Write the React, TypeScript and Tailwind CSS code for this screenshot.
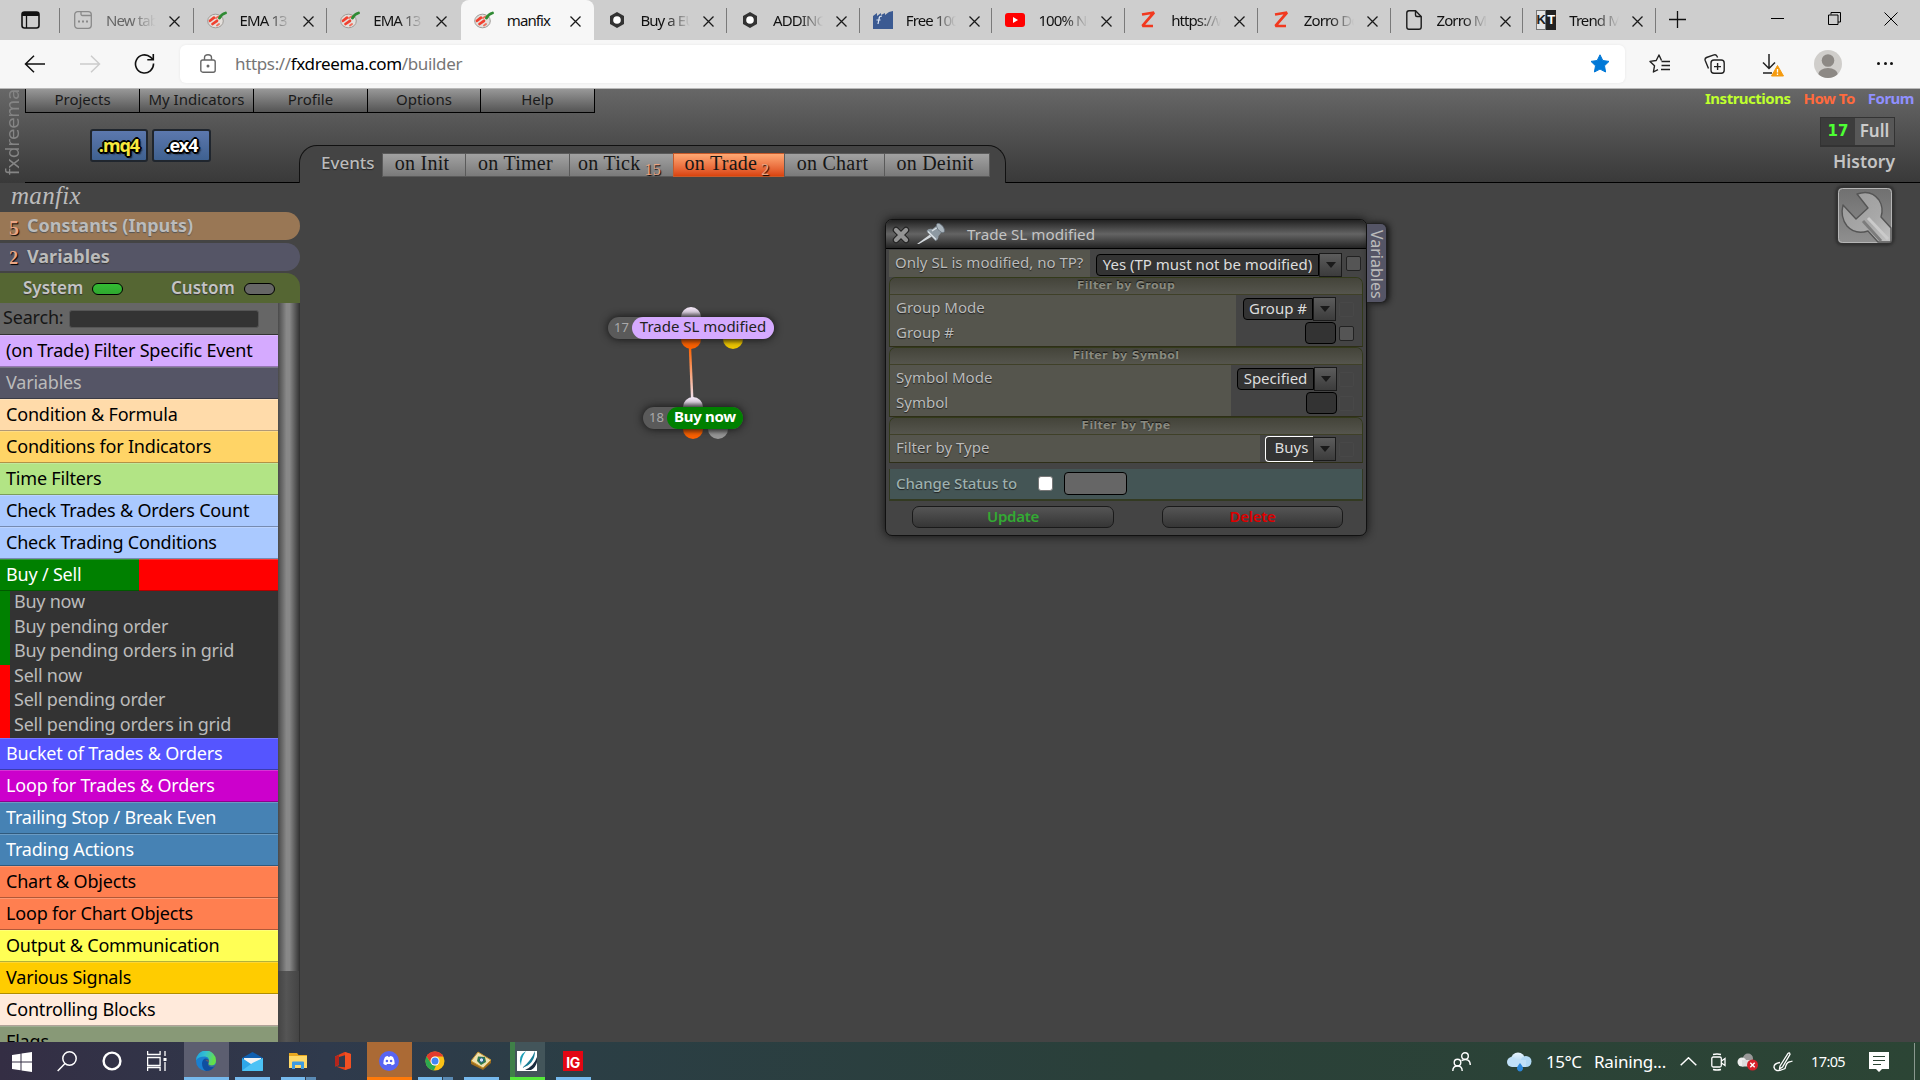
import React from "react";

type Kids = { children?: React.ReactNode };

/* ---------- browser tabs ---------- */

const Dish = () => (
  <svg width="20" height="18" viewBox="0 0 20 18">
    <ellipse cx="8.500" cy="10" rx="7.800" ry="6.800" fill="#e4e0dc" stroke="#a09c98" strokeWidth="1" />
    <path d="M3 9.800 7 6.600M5.500 13l4.500-3.200" stroke="#f0402f" strokeWidth="2.700" strokeLinecap="round" />
    <path d="M9 7 11.500 5.500M10 14.500l2-1.500" stroke="#f0705f" strokeWidth="2" strokeLinecap="round" />
    <path d="M12.500 7c1.500-3 3.500-4.500 6-5" stroke="#2f8a33" strokeWidth="2.800" fill="none" strokeLinecap="round" />
  </svg>
);
const NewTabIcon = () => (
  <svg width="18" height="18" viewBox="0 0 18 18" fill="none" stroke="#8a8a8a" strokeWidth="1.300">
    <rect x="0.700" y="0.700" width="16.600" height="16.600" rx="3" />
    <path d="M7 .7v2.300q0 1.500 1.500 1.500h8.500" />
    <path d="M4 10.500h2M8 10.500h2M12 10.500h2" strokeWidth="2" />
  </svg>
);
const HexIcon = () => (
  <svg width="18" height="18" viewBox="0 0 18 18">
    <path d="M9 1 16 5v8l-7 4-7-4V5z" fill="#333" />
    <circle cx="9" cy="9" r="3.800" fill="#fff" />
  </svg>
);
const FreeIcon = () => (
  <svg width="20" height="18" viewBox="0 0 20 18">
    <path d="M0 5 4 2v3l4-3v2l4-2v2l4-3 4-1v18H0z" fill="#3b5a92" />
    <path d="M9 5Q6 5 6 8l-1 5M3.500 9h4" stroke="#dfe7f4" strokeWidth="1.200" fill="none" />
  </svg>
);
const YtIcon = () => (
  <svg width="20" height="14" viewBox="0 0 20 14">
    <rect width="20" height="14" rx="3" fill="#f00" />
    <path d="M8 4l5 3-5 3z" fill="#fff" />
  </svg>
);
const ZIcon = () => (
  <svg width="16" height="18" viewBox="0 0 16 18">
    <path d="M2 3.500 14 1.500 2.500 14.800 13 15" stroke="#f1391f" strokeWidth="2.700" fill="none" strokeLinejoin="bevel" />
  </svg>
);
const FileIcon = () => (
  <svg width="16" height="20" viewBox="0 0 16 20" fill="none" stroke="#1a1a1a" strokeWidth="1.400">
    <path d="M3 .8h6.500l5.700 5.700V17q0 2.200-2.200 2.200H3Q.8 19.200.8 17V3Q.8.8 3 .8z" />
    <path d="M9.500.8V5q0 1.500 1.500 1.500h4.200" />
  </svg>
);
const KtIcon = () => (
  <span className="flex h-5 w-5 font-['Liberation_Sans_Narrow','Liberation_Sans'] text-[13px] leading-5 font-bold">
    <span className="flex w-1/2 justify-center border border-[#777] bg-[#e4e4e4] leading-[18px] text-[#222]">K</span>
    <span className="flex w-1/2 justify-center bg-[#222] text-white">T</span>
  </span>
);
const Cross = () => (
  <svg width="11" height="11" viewBox="0 0 11 11" stroke="#1a1a1a" strokeWidth="1.300">
    <path d="M.5.5l10 10M10.500.5l-10 10" />
  </svg>
);

const tabs: { t: string; i: React.ReactNode; w: string; dim?: boolean; active?: boolean; sep?: boolean }[] = [
  { t: "New tab", i: <NewTabIcon />, w: "w-[133.600px]", dim: true, sep: true },
  { t: "EMA 13", i: <Dish />, w: "w-[133.600px]", sep: true },
  { t: "EMA 13", i: <Dish />, w: "w-[133.600px]" },
  { t: "manfix", i: <Dish />, w: "w-[133.600px]", active: true },
  { t: "Buy a EUR", i: <HexIcon />, w: "w-[132.700px]", sep: true },
  { t: "ADDING", i: <HexIcon />, w: "w-[132.700px]", sep: true },
  { t: "Free 100", i: <FreeIcon />, w: "w-[132.700px]", sep: true },
  { t: "100% No", i: <YtIcon />, w: "w-[132.700px]", sep: true },
  { t: "https://w", i: <ZIcon />, w: "w-[132.700px]", sep: true },
  { t: "Zorro Do", i: <ZIcon />, w: "w-[132.700px]", sep: true },
  { t: "Zorro Ma", i: <FileIcon />, w: "w-[132.700px]", sep: true },
  { t: "Trend Mo", i: <KtIcon />, w: "w-[132.700px]", sep: true },
];

const TabStrip = () => (
  <div className="flex h-10 shrink-0 bg-[#cecece] text-[15px] text-[#111]">
    <div className="flex w-[60px] shrink-0 items-center pl-[21px]">
      <svg width="19" height="18" viewBox="0 0 19 18">
        <rect x="1" y="1" width="17" height="16" rx="2.500" fill="none" stroke="#111" strokeWidth="1.600" />
        <path d="M1 3q0-2 2-2h13q2 0 2 2v2H1z" fill="#111" />
        <path d="M5.500 5v12" stroke="#111" strokeWidth="1.300" />
      </svg>
      <span className="ml-[18.500px] h-[25px] w-px bg-[#7a7a7a]" />
    </div>
    {tabs.map((t, k) => (
      <div key={k} className={`flex h-10 ${t.w} shrink-0 items-center ${t.active ? "rounded-t-lg bg-[#f7f7f7]" : ""}`}>
        <span className="ml-[13px] flex w-5 shrink-0 justify-center">{t.i}</span>
        <span
          className={`ml-[13px] w-[51px] overflow-hidden tracking-[-0.9px] whitespace-nowrap ${t.dim ? "text-[#666]" : ""} ${
            t.active ? "" : "[mask-image:linear-gradient(90deg,#000_50%,transparent_98%)]"
          }`}
        >
          {t.t}
        </span>
        <span className="mt-0.5 ml-3 shrink-0"><Cross /></span>
        <span className={`ml-auto h-[25px] w-px ${t.sep ? "bg-[#7a7a7a]" : ""}`} />
      </div>
    ))}
    <svg className="mt-[11px] ml-[13px] shrink-0" width="17" height="17" viewBox="0 0 17 17" stroke="#111" strokeWidth="1.300">
      <path d="M8.500 0v17M0 8.500h17" />
    </svg>
    <div className="ml-auto flex items-start gap-[43px] pr-[22px]">
      <span className="mt-[18px] mr-px h-px w-[13px] bg-black" />
      <svg className="mt-3" width="13" height="13" viewBox="0 0 13 13" fill="none" stroke="#000">
        <path d="M.5 3h9.500v9.500H.5zM3 2.500V.5h9.500V10H10" />
      </svg>
      <svg className="mt-3" width="14" height="14" viewBox="0 0 14 14" stroke="#000">
        <path d="M.5.5l13 13M13.500.5l-13 13" />
      </svg>
    </div>
  </div>
);

const Toolbar = () => (
  <div className="flex h-[49px] shrink-0 items-center border-b border-[#b9b9b9] bg-[#f7f7f7] pb-px">
    <svg className="ml-6" width="21" height="18" viewBox="0 0 21 18" fill="none" stroke="#111" strokeWidth="1.500">
      <path d="M21 9H1.500M10 .8 1.500 9l8.500 8.200" />
    </svg>
    <svg className="ml-[35px]" width="21" height="18" viewBox="0 0 21 18" fill="none" stroke="#ccc" strokeWidth="1.500">
      <path d="M0 9h19.500M11 .8 19.500 9 11 17.200" />
    </svg>
    <svg className="ml-[33px]" width="21" height="20" viewBox="0 0 21 20" fill="none" stroke="#111" strokeWidth="1.600">
      <path d="M19.500 9.500a9 9 0 1 1-3-6.300l2.500 2.300M19.300 0v5.800h-6" />
    </svg>
    <div className="ml-[25px] flex h-[38px] w-[1445px] items-center rounded-md bg-white shadow-[0_0_3px_#0001]">
      <svg className="ml-5" width="16" height="19" viewBox="0 0 16 19" fill="none" stroke="#666" strokeWidth="1.400">
        <rect x=".8" y="6" width="14.400" height="12.200" rx="2" />
        <path d="M4.500 6V3.800a3.500 3 0 0 1 7 0V6" />
        <circle cx="8" cy="12" r=".8" fill="#666" />
      </svg>
      <span className="ml-[19px] text-[17px] tracking-[-0.350px] text-[#767676]">
        https://<span className="text-black">fxdreema.com</span>/builder
      </span>
      <svg className="mr-[15px] ml-auto" width="20" height="19" viewBox="0 0 20 19">
        <path d="M10 .8l2.800 5.700 6.200.9-4.500 4.400 1.100 6.200L10 15.100 4.400 18l1.100-6.200L1 7.400l6.200-.9z" fill="#0078d7" stroke="#0078d7" strokeLinejoin="round" />
      </svg>
    </div>
    <svg className="ml-6" width="21" height="19" viewBox="0 0 21 19" fill="none" stroke="#222" strokeWidth="1.400" strokeLinejoin="round">
      <path d="M12.500 6.500 10 1 7.200 6.500 1 7.400l4.500 4.400L4.400 18 9 15.600M12.500 7.500H21M12.500 11.500H21M12 15.500h9" />
    </svg>
    <svg className="ml-[34px]" width="21" height="20" viewBox="0 0 21 20" fill="none" stroke="#222" strokeWidth="1.400">
      <rect x="7" y="6" width="13.200" height="13.200" rx="3" />
      <path d="M13.600 9v7M10 12.600h7M4.500 14.500 1.200 6.500Q.5 4.500 2.500 3.500l7.500-2.600q2-.7 3 1.300l.6 1.300" />
    </svg>
    <svg className="mt-0.5 ml-[37px]" width="22" height="24" viewBox="0 0 22 24" fill="none" stroke="#222" strokeWidth="1.500">
      <path d="M7 1v14M1 9.500l6 6 6-6M1 20h9" />
      <path d="M15.500 12.500 21.500 23h-12z" fill="#f59b0f" stroke="#f59b0f" strokeWidth="1" />
      <path d="M15.500 16v3.500M15.500 20.500V22" stroke="#fff" strokeWidth="1.300" />
    </svg>
    <svg className="ml-[30px]" width="28" height="28" viewBox="0 0 28 28">
      <clipPath id="av"><circle cx="14" cy="14" r="14" /></clipPath>
      <g clipPath="url(#av)">
        <rect width="28" height="28" fill="#d0cecb" />
        <circle cx="14" cy="10.500" r="6.300" fill="#8d8985" />
        <ellipse cx="14" cy="25" rx="10" ry="7" fill="#8d8985" />
      </g>
    </svg>
    <div className="ml-[35px] flex gap-[3.500px]">
      {[0, 1, 2].map((i) => (
        <span key={i} className="h-[3px] w-[3px] rounded-full bg-[#111]" />
      ))}
    </div>
  </div>
);

/* ---------- application header ---------- */

const menu: [string, string][] = [
  ["Projects", "w-[114px]"],
  ["My Indicators", "w-[114px]"],
  ["Profile", "w-[114px]"],
  ["Options", "w-[113px]"],
  ["Help", "w-[114px]"],
];

const events: { t: string; w: string; n?: string; on?: boolean }[] = [
  { t: "on Init", w: "w-[83px]" },
  { t: "on Timer", w: "w-[104px]" },
  { t: "on Tick", w: "w-[104px]", n: "15" },
  { t: "on Trade", w: "w-[111px]", n: "2", on: true },
  { t: "on Chart", w: "w-[100px]" },
  { t: "on Deinit", w: "w-[106px]" },
];

const ExportBtn = ({ children, w, c }: Kids & { w: string; c: string }) => (
  <div
    className={`flex h-[33px] ${w} items-center justify-center rounded-[3px] border-2 border-[#20262e] bg-gradient-to-b from-[#5c78ae] to-[#3f6190] text-[18px] font-bold tracking-[-1px] ${c} [text-shadow:2px_0_#000,-2px_0_#000,0_2px_#000,0_-2px_#000,1px_1px_#000,-1px_-1px_#000,1px_-1px_#000,-1px_1px_#000,2px_2px_2px_#000]`}
  >
    {children}
  </div>
);

const Header = () => (
  <div className="flex h-[94px] shrink-0 bg-gradient-to-b from-[#676767] to-[#393939]">
    <div className="flex h-[86px] w-[25px] shrink-0 items-center justify-center">
      <span className="rotate-180 font-['DejaVu_Sans'] text-[18.500px] tracking-[-0.3px] text-[#858585] [writing-mode:vertical-rl]">fxdreema</span>
    </div>
    <div className="flex w-[275px] shrink-0 flex-col border-b border-black">
      <div className="flex h-6 w-[570px] border-b border-l border-black">
        {menu.map(([m, w]) => (
          <div
            key={m}
            className={`${w} shrink-0 border-r border-black bg-gradient-to-b from-[#989898] to-[#555] text-center text-[15px] leading-5 text-[#1a1a1a]`}
          >
            {m}
          </div>
        ))}
      </div>
      <div className="mt-4 flex gap-1 pl-[65px]">
        <ExportBtn w="w-[58px]" c="text-[#f7e83e]">.mq4</ExportBtn>
        <ExportBtn w="w-[59px]" c="text-white">.ex4</ExportBtn>
      </div>
    </div>
    <div className="mt-14 -ml-px flex h-[38px] w-[707px] shrink-0 rounded-t-[18px] border-x border-t border-[#111] bg-[#444]">
      <span className="w-[82px] pl-[21px] text-[17px] leading-[34px] font-medium text-[#bbb] [text-shadow:0_1px_1px_#222]">Events</span>
      <div className="mt-[7px] flex h-6 font-['Liberation_Serif'] text-[20px] tracking-[0.250px] text-[#161616]">
        {events.map((e) => (
          <div
            key={e.t}
            className={`${e.w} flex justify-center border border-r-0 last:border-r ${
              e.on
                ? "border-[#c75a2a] bg-gradient-to-b from-[#ffa873] to-[#d9430c]"
                : "border-[#5a5a5a] bg-gradient-to-b from-[#a2a2a2] to-[#7a7a7a]"
            } pr-1 leading-[19px] whitespace-nowrap`}
          >
            {e.t}
            {e.n && (
              <span className="relative top-[6px] ml-1 text-[16px] text-[#e9a583] [text-shadow:1px_1px_1px_#000]">{e.n}</span>
            )}
          </div>
        ))}
      </div>
    </div>
    <div className="flex flex-1 flex-col border-b border-black font-bold">
      <div className="flex justify-end gap-[13px] pr-[6px] text-[15px] leading-[19px] tracking-[-0.5px]">
        <span className="text-[#bfff2e]">Instructions</span>
        <span className="text-[#ff6a3d]">How To</span>
        <span className="text-[#9090ff]">Forum</span>
      </div>
      <div className="mt-[9px] mr-[25px] flex h-[30px] w-[75px] self-end border border-b-2 border-[#333] bg-[#575757] text-[17px] leading-[26px]">
        <span className="w-[34px] bg-[#3c3c3c] text-center font-['DejaVu_Sans'] text-[15px] text-[#4dff33]">17</span>
        <span className="flex-1 text-center font-semibold text-[#ccc]">Full</span>
      </div>
      <span className="mt-0.5 mr-[25px] self-end text-[17.500px] leading-6 font-semibold text-[#c4c4c4]">History</span>
    </div>
  </div>
);

/* ---------- sidebar ---------- */

const catsTop: [string, string][] = [
  ["(on Trade) Filter Specific Event", "bg-[#d5aaff] text-black"],
  ["Variables", "bg-[#555566] text-[#bbb]"],
  ["Condition & Formula", "bg-[#ffdbaa] text-black"],
  ["Conditions for Indicators", "bg-[#ffd466] text-black"],
  ["Time Filters", "bg-[#b2e485] text-black"],
  ["Check Trades & Orders Count", "bg-[#aac9ff] text-black"],
  ["Check Trading Conditions", "bg-[#aac9ff] text-black"],
];
const catsBottom: [string, string][] = [
  ["Bucket of Trades & Orders", "bg-[#5555ff] text-white"],
  ["Loop for Trades & Orders", "bg-[#cc00cc] text-white"],
  ["Trailing Stop / Break Even", "bg-[#4682b4] text-white"],
  ["Trading Actions", "bg-[#4682b4] text-white"],
  ["Chart & Objects", "bg-[#ff7f50] text-black"],
  ["Loop for Chart Objects", "bg-[#ff7f50] text-black"],
  ["Output & Communication", "bg-[#ffff55] text-black"],
  ["Various Signals", "bg-[#ffcc00] text-black"],
  ["Controlling Blocks", "bg-[#ffeadb] text-black"],
  ["Flags", "bg-[#889977] text-black"],
];
const orders = [
  "Buy now",
  "Buy pending order",
  "Buy pending orders in grid",
  "Sell now",
  "Sell pending order",
  "Sell pending orders in grid",
];

const Cat = ({ t, c }: { t: string; c: string }) => (
  <div className={`h-8 shrink-0 border-t border-b border-t-white/20 border-b-black/30 pl-[6px] text-[18px] leading-[29px] tracking-[-0.190px] whitespace-nowrap ${c}`}>{t}</div>
);

const Sidebar = () => (
  <div className="flex h-[859px] w-[300px] shrink-0 flex-col overflow-hidden">
    <div className="h-[29px] shrink-0 pl-[11px] font-['Liberation_Serif'] text-[25px] leading-[25px] tracking-[0.3px] text-[#bbb] italic">manfix</div>
    <div className="flex h-7 shrink-0 items-center rounded-r-[14px] bg-[#997755] pl-[9px] text-[18px] font-bold text-[#bbb] [text-shadow:0_1px_1px_#555]">
      <span className="w-[18px] pt-1 font-['Liberation_Serif'] text-[20px] text-[#e9a583] [text-shadow:1px_1px_1px_#000]">5</span>
      <span className="pb-px">Constants (Inputs)</span>
    </div>
    <div className="mt-[3px] flex h-7 shrink-0 items-center rounded-r-[14px] bg-[#555566] pl-[9px] text-[18px] font-bold text-[#bbb] [text-shadow:0_1px_1px_#333]">
      <span className="w-[18px] pt-0.5 font-['Liberation_Serif'] text-[18px] text-[#e9a583] [text-shadow:1px_1px_1px_#000]">2</span>
      <span className="pb-px">Variables</span>
    </div>
    <div className="mt-0.5 flex h-[30px] shrink-0 items-center rounded-tr-[14px] bg-[#556633] pl-[23px] text-[17px] font-semibold text-[#c4c4c4] [text-shadow:0_1px_1px_#333]">
      <span className="w-[69px]">System</span>
      <span className="mt-px h-3 w-[31px] rounded-full border border-black bg-gradient-to-b from-[#33bb33] to-[#2fa82f]" />
      <span className="ml-12 w-[73px]">Custom</span>
      <span className="mt-px h-3 w-[31px] rounded-full border border-black bg-[#666]" />
    </div>
    <div className="flex min-h-0 flex-1">
      <div className="flex w-[278px] flex-col">
        <div className="flex h-8 shrink-0 items-start border-b border-[#333] bg-[#666]">
          <span className="w-[69px] pl-[3px] text-[18px] leading-[29px] tracking-[-0.190px] text-[#161616]">Search:</span>
          <span className="mt-[7px] h-[18px] w-[190px] rounded-[3px] border border-[#555] bg-[#333]" />
        </div>
        {catsTop.map(([t, c]) => (
          <Cat key={t} t={t} c={c} />
        ))}
        <Cat t="Buy / Sell" c="text-white bg-[linear-gradient(90deg,#008000_50%,#ff0000_50%)]" />
        <div className="flex h-[147px] shrink-0 bg-[#333]">
          <div className="w-[10px] bg-[linear-gradient(180deg,#008000_50.500%,#ff0000_50.500%)]" />
          <div className="pl-1 text-[18px] leading-[24.500px] tracking-[-0.240px] text-[#bbb]">
            {orders.map((o) => (
              <div key={o} className="-mt-0.5 mb-0.5 h-[24.500px] whitespace-nowrap">{o}</div>
            ))}
          </div>
        </div>
        {catsBottom.map(([t, c]) => (
          <Cat key={t} t={t} c={c} />
        ))}
      </div>
      <div className="flex w-[22px] flex-col border-r border-[#333] bg-[linear-gradient(90deg,#444,#555_40%,#444)]">
        <div className="h-[668px] bg-[linear-gradient(90deg,#4a4a4a,#888_40%,#888_55%,#383838)]" />
      </div>
    </div>
  </div>
);

/* ---------- canvas ---------- */

const Nodes = () => (
  <div className="absolute top-[120px] left-[300px] h-[140px] w-[200px]">
    <svg className="absolute inset-0" width="200" height="140" viewBox="0 0 200 140">
      <defs>
        <linearGradient id="w" x2="0" y2="1">
          <stop offset="0" stopColor="#ff6200" />
          <stop offset="1" stopColor="#f0e4f4" />
        </linearGradient>
        <linearGradient id="inp" x2="0" y2="1">
          <stop offset="0" stopColor="#f4e8f8" />
          <stop offset=".25" stopColor="#e8dcec" />
          <stop offset=".5" stopColor="#8d8690" />
        </linearGradient>
        <linearGradient id="o" x2="0" y2="1">
          <stop offset=".5" stopColor="#c44c00" />
          <stop offset=".75" stopColor="#ff6200" />
        </linearGradient>
        <linearGradient id="y" x2="0" y2="1">
          <stop offset=".5" stopColor="#a88a00" />
          <stop offset=".75" stopColor="#f0c800" />
        </linearGradient>
        <linearGradient id="g" x2="0" y2="1">
          <stop offset=".5" stopColor="#6a6a6a" />
          <stop offset=".75" stopColor="#999" />
        </linearGradient>
      </defs>
      <path d="M88.800 45H91.200L93.500 97H91z" fill="url(#w)" />
      <circle cx="91" cy="14" r="10" fill="url(#inp)" />
      <circle cx="91" cy="36" r="10" fill="url(#o)" />
      <circle cx="133" cy="36" r="10" fill="url(#y)" />
      <circle cx="93" cy="104" r="10" fill="url(#inp)" />
      <circle cx="93" cy="126" r="10" fill="url(#o)" />
      <circle cx="118" cy="126" r="10" fill="url(#g)" />
    </svg>
    <div className="absolute top-[14px] left-2 flex h-[22px] w-[166px] rounded-full bg-[#5a5a5a] shadow-[0_0_8px_#111]">
      <span className="w-6 pl-1.5 text-[13px] leading-[21px] text-[#aaa]">17</span>
      <span className="flex-1 rounded-full bg-[#d5aaff] text-center text-[15px] leading-[19px] text-[#222]">Trade SL modified</span>
    </div>
    <div className="absolute top-[104px] left-[43px] flex h-[22px] w-[100px] rounded-full bg-[#5a5a5a] shadow-[0_0_8px_#111]">
      <span className="w-6 pl-1.5 text-[13px] leading-[21px] text-[#aaa]">18</span>
      <span className="flex-1 rounded-full bg-[#008000] text-center text-[15px] leading-[19px] font-bold tracking-[-0.3px] text-white">Buy now</span>
    </div>
  </div>
);

const Select = ({ children, w, focus }: Kids & { w: string; focus?: boolean }) => (
  <div className={`flex ${w} h-6`}>
    <span
      className={`flex-1 rounded-l-[4px] bg-[#333] text-center text-[15px] whitespace-nowrap text-[#ddd] ${
        focus ? "-my-px border-[1.500px] border-r-0 border-white pl-1 leading-[21px]" : "my-px border border-black leading-[19px]"
      }`}
    >
      {children}
    </span>
    <span className="flex w-[23px] items-center justify-center border border-[#1a1a1a] bg-gradient-to-b from-[#5c5c5c] to-[#3c3c3c]">
      <svg width="10" height="6" viewBox="0 0 10 6"><path d="M0 0h10L5 6z" fill="#1a1a1a" /></svg>
    </span>
  </div>
);
const Check = ({ faint }: { faint?: boolean }) => (
  <span className={`h-[15px] w-[15px] rounded-[2px] border ${faint ? "border-[#484848]" : "border-[#222] bg-[#555]"}`} />
);
const Input = () => <span className="h-[22px] w-[31px] rounded-[4px] border border-black bg-[#333]" />;

const Group = ({
  title, labels, lw, children, h,
}: Kids & { title: string; labels: string[]; lw: string; h: string }) => (
  <div className={`flex ${h} flex-col rounded-t-[7px] border border-[#333a1a] border-b-[#2e2e18]`}>
    <div className="h-[17px] shrink-0 rounded-t-[6px] border-b border-[#3f4028] bg-gradient-to-b from-[#44443a] to-[#55554d] text-center font-['DejaVu_Sans'] text-[11px] leading-4 font-bold tracking-[0.3px] text-[#8a8a80] [text-shadow:0_-1px_1px_#111]">
      {title}
    </div>
    <div className="flex flex-1">
      <div className={`${lw} bg-[#55554d] pl-1.5 text-[15px] leading-[25px] text-[#bbb] [text-shadow:0_1px_1px_#222]`}>
        {labels.map((l) => (
          <div key={l}>{l}</div>
        ))}
      </div>
      <div className="flex flex-1 flex-col items-end gap-px pt-0.5">{children}</div>
    </div>
  </div>
);

const Panel = () => (
  <div className="absolute top-[36px] left-[585px] flex">
    <div className="flex h-[317px] w-[482px] flex-col rounded-[7px] border border-[#111] bg-[#444] shadow-[0_0_10px_#111]">
      <div className="flex h-[29px] shrink-0 items-center rounded-t-[6px] border-b border-black bg-[linear-gradient(180deg,#222,#646464_50%,#242424)] text-[15.200px] text-[#c4c4c4]">
        <svg className="mt-0.5 ml-1.5" width="18" height="18" viewBox="0 0 18 18" strokeLinecap="round">
          <path d="M4 4l10 10M14 4 4 14" stroke="#222" strokeWidth="6.500" />
          <path d="M4 4l10 10M14 4 4 14" stroke="#949494" strokeWidth="4.300" />
        </svg>
        <svg className="ml-[7px]" width="29" height="22" viewBox="0 0 29 22">
          <path d="M0 21 13 11.500l2 2L2 21z" fill="#d5dade" />
          <path d="M9.500 8q2-3 6-2l5-4 5 6-4 5q0 4-3 5z" fill="#8d99a2" />
          <path d="M11 8.500l8 8M15 8l6-4" stroke="#d9e0e5" strokeWidth="1.500" />
          <ellipse cx="23.500" cy="5" rx="2.800" ry="5.500" transform="rotate(-38 23.500 5)" fill="#aab5bd" stroke="#66707a" strokeWidth=".8" />
        </svg>
        <span className="ml-[21px]">Trade SL modified</span>
      </div>
      <div className="mt-px flex h-[27px] shrink-0 items-center pl-[3px]">
        <span className="h-[27px] w-[201px] bg-[#55554d] pl-1.5 text-[15px] leading-[25px] whitespace-nowrap text-[#bbb] [text-shadow:0_1px_1px_#222]">
          Only SL is modified, no TP?
        </span>
        <span className="mt-0.5 ml-1.5"><Select w="w-[246px]">Yes (TP must not be modified)</Select></span>
        <span className="ml-1 flex"><Check /></span>
      </div>
      <div className="mx-[3px] flex flex-col">
        <Group title="Filter by Group" labels={["Group Mode", "Group #"]} lw="w-[346px]" h="h-[70px]">
          <div className="flex items-center gap-[3px] pr-2"><Select w="w-[93px]">Group #</Select><Check faint /></div>
          <div className="flex items-center gap-[3px] pr-2"><Input /><Check /></div>
        </Group>
        <Group title="Filter by Symbol" labels={["Symbol Mode", "Symbol"]} lw="w-[341px]" h="h-[70px]">
          <div className="flex items-center gap-0.5 pr-2"><Select w="w-[100px]">Specified</Select><Check faint /></div>
          <div className="flex items-center gap-0.5 pr-2"><Input /><Check faint /></div>
        </Group>
        <Group title="Filter by Type" labels={["Filter by Type"]} lw="w-[370px]" h="h-[46px]">
          <div className="flex items-center gap-[3px] pr-2"><Select w="w-[71px]" focus>Buys</Select><Check faint /></div>
        </Group>
        <div className="mt-1.5 flex h-8 items-center border border-t-0 border-b-2 border-[#333a22] bg-[#445555] pb-px pl-1.5 text-[15px] font-medium text-[#9db0ae]">
          <span className="w-[142px] pb-px tracking-[-0.1px] [text-shadow:0_1px_1px_#222]">Change Status to</span>
          <span className="h-[15px] w-[15px] rounded-[3px] border border-[#777] bg-white" />
          <span className="ml-[11px] h-[23px] w-[63px] rounded-[4px] border border-black bg-[#666]" />
        </div>
        <div className="mt-[5px] flex pl-[23px] text-center text-[15px] leading-[19px] font-semibold tracking-[-0.3px]">
          <span className="h-[22px] w-[202px] rounded-[7px] border border-[#1a1a1a] bg-gradient-to-b from-[#555] to-[#363636] text-[#3a3]">Update</span>
          <span className="ml-12 h-[22px] w-[181px] rounded-[7px] border border-[#1a1a1a] bg-gradient-to-b from-[#555] to-[#363636] text-[#d00]">Delete</span>
        </div>
      </div>
    </div>
    <div className="mt-[4px] flex h-[80px] w-5 justify-center rounded-r-[6px] border border-l-0 border-[#222] bg-[#555566] text-[16px] leading-[18px] text-[#bbb] shadow-[2px_0_6px_#111] [writing-mode:vertical-rl]">
      <span className="pt-[3px]">Variables</span>
    </div>
  </div>
);

const Wrench = () => (
  <div className="absolute top-[3px] right-[26px] h-[59px] w-[58px] rounded-[6px] border-2 border-[#333] bg-gradient-to-b from-[#707070] to-[#8f8f8f] shadow-[0_0_3px_#222]">
    <svg width="54" height="55" viewBox="0 0 54 55">
      <defs>
        <linearGradient id="wr" x2="1" y2="1">
          <stop offset="0" stopColor="#9a9a9a" />
          <stop offset=".6" stopColor="#a8a8a8" />
          <stop offset="1" stopColor="#c4c4c4" />
        </linearGradient>
      </defs>
      <rect x=".5" y=".5" width="53" height="54" rx="4" fill="none" stroke="#b5b5b5" />
      <path d="M19 6q14-5 22 6 5 8 2 17l10 11v14H40L30 43q-13 4-21-5Q2 29 5 17l13 14 12-11z" fill="url(#wr)" stroke="#555" strokeWidth="1.400" strokeLinejoin="round" />
      <path d="M25 33 43 53" stroke="#7c7c7c" strokeWidth="3" />
      <path d="M30 30 50 51" stroke="#cacaca" strokeWidth="3" />
    </svg>
  </div>
);

/* ---------- taskbar ---------- */

const Tile = ({ children, w, c = "", bar }: Kids & { w: string; c?: string; bar?: React.ReactNode }) => (
  <div className={`flex h-[38px] shrink-0 flex-col items-center ${w} ${c}`}>
    <div className="flex h-[35px] items-center pt-[3px]">{children}</div>
    <div className="flex h-[3px] w-full">{bar}</div>
  </div>
);
const Blue = () => <span className="flex-1 bg-[#76b9ed]" />;
const BlueSplit = () => (
  <>
    <span className="w-[24px] bg-[#76b9ed]" />
    <span className="ml-px flex-1 bg-[#5a8ab4]" />
  </>
);

const Taskbar = () => (
  <div className="flex h-[38px] shrink-0 items-center bg-[linear-gradient(90deg,#342e44_0%,#2f3a4c_17%,#2b3e45_30%,#2a4039_60%,#2c4535_100%)] text-white">
    <svg className="ml-3 mt-px" width="20" height="20" viewBox="0 0 20 20" fill="#fff">
      <path d="M0 3 8.500 1.700v7.800H0zM9.500 1.500 20 0v9.500H9.500zM0 10.500h8.500v7.800L0 17zM9.500 10.500H20V20L9.500 18.500z" />
    </svg>
    <svg className="ml-[25px]" width="20" height="21" viewBox="0 0 20 21" fill="none" stroke="#fff" strokeWidth="1.500">
      <circle cx="12.500" cy="7.500" r="6.700" /><path d="M8 12.500 .7 20" />
    </svg>
    <svg className="ml-[25px]" width="20" height="20" viewBox="0 0 20 20" fill="none" stroke="#fff" strokeWidth="2.400">
      <circle cx="10" cy="10" r="8.400" />
    </svg>
    <svg className="ml-[25px]" width="20" height="20" viewBox="0 0 20 20" fill="none" stroke="#fff" strokeWidth="1.300">
      <path d="M.6 0v3.500h12.500V0M.6 6.500h12.500v8H.6zM.6 20v-3.500h12.500V20M18 0v5M18 11v9" />
      <path d="M16.500 7h3v3h-3z" fill="#fff" stroke="none" />
    </svg>
    <Tile w="w-[45px] ml-[17px]" c="bg-[#5c5e70]" bar={<Blue />}>
      <svg className="-ml-0.5" width="20" height="20" viewBox="0 0 20 20">
        <defs>
          <linearGradient id="eg" x2="1" y2=".3">
            <stop offset="0" stopColor="#1a9de0" /><stop offset=".5" stopColor="#35c1d0" /><stop offset="1" stopColor="#66e045" />
          </linearGradient>
        </defs>
        <circle cx="10" cy="10" r="10" fill="#1a7fd0" />
        <path d="M0 9.500A10 10 0 0 1 20 9.500q0 5-5 5-4-.3-2.500-3Q14 6 9 5.500 2 5.500 0 9.500z" fill="url(#eg)" />
        <path d="M6 12q1-6 6-4 1.500 1.500.5 3.500-1.500 3 2.500 4.500 2.500 0 4-1.500Q16 20 10 20q-4-2-4-8z" fill="#0f4fa0" />
        <path d="M9.500 9.500q2-2 3.500 0 .5 1-.5 2.500-1 2 1.500 3.500h4l1-1.500q-2 1.300-4.500.5-2.500-1-1.500-3" fill="#5c5e70" />
      </svg>
    </Tile>
    <Tile w="w-[35px] ml-[6px]" bar={<Blue />}>
      <svg width="21" height="19" viewBox="0 0 21 19">
        <path d="M0 6 10.500 0 21 6v2H0z" fill="#0f5fb0" />
        <path d="M2 6h17v8H2z" fill="#f2f2f2" />
        <path d="M0 6l10.500 7L21 6v12q0 1-1 1H1q-1 0-1-1z" fill="#2ea7e8" />
        <path d="M0 18.500 10.500 11 21 6v12q0 1-1 1H1z" fill="#4cc2f5" />
      </svg>
    </Tile>
    <Tile w="w-[35px] ml-[11px]" bar={<BlueSplit />}>
      <svg className="-ml-0.5" width="18" height="16" viewBox="0 0 18 16">
        <path d="M0 0h8l1.500 2H18v12H0z" fill="#e9a820" /><path d="M0 3h18v12H0z" fill="#ffd968" />
        <path d="M3 16V9.500q0-1 1-1h10q1 0 1 1V16h-3v-4H6v4z" fill="#3e9be0" />
      </svg>
    </Tile>
    <Tile w="w-[35px] ml-[10px]">
      <svg className="-ml-px" width="16" height="18" viewBox="0 0 16 18">
        <path d="M0 4.500 9.500 0 16 2v14l-6 2-9-3.500 9 .7V3.200L4 5v8l-4 1.500z" fill="#e3401a" />
        <path d="M10 0l6 2v14l-6 2z" fill="#f25022" /><path d="M0 4.500 4 3v9.500l-4 2z" fill="#b4251c" />
      </svg>
    </Tile>
    <Tile w="w-[45px] ml-[6px]" c="bg-[#ab6a35]" bar={<span className="flex-1 bg-[#ff7a0a]" />}>
      <svg className="-ml-px" width="20" height="20" viewBox="0 0 20 20">
        <circle cx="10" cy="10" r="10" fill="#5865f2" />
        <path d="M6 6q1.500-1 2.800-1l.4.800h1.600l.4-.8q1.300 0 2.800 1 2 3.500 1.700 6.800-1.300 1.200-3 1.500l-.7-1.300H8l-.7 1.300q-1.700-.3-3-1.500Q4 9.500 6 6z" fill="#fff" />
        <circle cx="7.900" cy="10" r="1.300" fill="#5865f2" /><circle cx="12.100" cy="10" r="1.300" fill="#5865f2" />
      </svg>
    </Tile>
    <Tile w="w-[35px] ml-[6px]" bar={<BlueSplit />}>
      <svg className="-ml-px" width="20" height="20" viewBox="0 0 20 20">
        <circle cx="10" cy="10" r="9.500" fill="#fbc116" />
        <path d="M1.500 5.500A9.500 9.500 0 0 1 18.300 5.500H10a4.500 4.500 0 0 0-4 6.500z" fill="#e23b2e" />
        <path d="M1.500 5.500 6 12.300A4.500 4.500 0 0 0 10 14.500h1L8.800 19.400A9.500 9.500 0 0 1 1.500 5.500z" fill="#2da94f" />
        <circle cx="10" cy="10" r="4.500" fill="#fff" /><circle cx="10" cy="10" r="3.500" fill="#4285f4" />
      </svg>
    </Tile>
    <Tile w="w-[35px] ml-[11px]" bar={<Blue />}>
      <svg className="-ml-px" width="20" height="20" viewBox="0 0 20 20">
        <path d="M0 10v3l12 6 8-7V9z" fill="#9c6c1c" />
        <path d="M7 1 20 9l-8 8L0 10z" fill="#efe0ae" stroke="#c4912c" />
        <path d="M7 5.500l7 .5 1 5-5 3-4-4z" fill="#2f7a4a" /><circle cx="10.500" cy="9" r="2.200" fill="#cfe2f2" stroke="#1f5580" />
      </svg>
    </Tile>
    <Tile w="w-[35px] ml-[11px]" c="bg-[linear-gradient(90deg,#3f8048_5px,#43555a_5px)]" bar={<span className="flex-1 bg-[#55e83a]" />}>
      <svg className="-ml-px" width="20" height="20" viewBox="0 0 20 20">
        <rect width="20" height="20" fill="#fff" />
        <path d="M9 0Q0 5 4 15 4 7 9 0z" fill="#1fa0b8" /><path d="M18 0Q18 13 5 17 14 10 18 0z" fill="#1a7d96" />
        <path d="M20 6q-3 9-12 13h6q5-3 6-8z" fill="#1b2b3e" />
      </svg>
    </Tile>
    <Tile w="w-[35px] ml-[11px]" bar={<Blue />}>
      <span className="-ml-px h-5 w-5 bg-[#e20613] text-center font-['Inter'] text-[14px] leading-[23px] font-bold tracking-[-0.5px]">IG</span>
    </Tile>
    <div className="ml-auto flex h-[38px] items-center pt-px">
      <svg width="19" height="20" viewBox="0 0 19 20" fill="none" stroke="#fff" strokeWidth="1.400">
        <circle cx="13" cy="4" r="3.300" /><circle cx="5.500" cy="10.500" r="3.300" />
        <path d="M.8 19q0-5 4.700-5t4.700 5M9.500 8.500q8.500-3 8.800 4.500" />
      </svg>
      <svg className="ml-9" width="25" height="20" viewBox="0 0 25 20">
        <defs><linearGradient id="cl" x2="0" y2="1"><stop offset="0" stopColor="#e8f5ff" /><stop offset="1" stopColor="#9ccbee" /></linearGradient></defs>
        <circle cx="11" cy="7.500" r="7" fill="url(#cl)" /><circle cx="5" cy="10" r="5" fill="#c0e0f8" /><circle cx="19" cy="9.500" r="5.500" fill="#b0d8f5" />
        <path d="M5 8h14v7H5z" fill="#c0e0f8" /><path d="M13 11q3.500 4 3 6-1 2.500-3 2.500T10 17q-.5-2 3-6z" fill="#2b86d8" />
      </svg>
      <span className="ml-[14px] w-[48px] text-[17px] tracking-[-0.5px]">15°C</span>
      <span className="w-[86px] text-[17px] tracking-[-0.2px]">Raining...</span>
      <svg width="17" height="9" viewBox="0 0 17 9" fill="none" stroke="#fff" strokeWidth="1.500"><path d="M.7 8.300l7.800-7.500 7.800 7.500" /></svg>
      <svg className="ml-[14px]" width="15" height="18" viewBox="0 0 15 18" fill="none" stroke="#fff" strokeWidth="1.300">
        <rect x=".8" y="4" width="9.500" height="10" rx="1.500" /><path d="M10.500 8l3.500-2.500v7L10.500 10M2 1.500Q6 .5 10 1.500M2 16.500q4 1 8 0" />
      </svg>
      <svg className="ml-[11px]" width="21" height="18" viewBox="0 0 21 18">
        <circle cx="11" cy="5.500" r="5" fill="#999" /><circle cx="5" cy="9" r="4.500" fill="#eee" /><path d="M5 7h12v6.500H5z" fill="#ddd" />
        <circle cx="15.500" cy="12" r="5.500" fill="#d6202a" /><path d="M13.300 9.800l4.400 4.400M17.700 9.800l-4.400 4.400" stroke="#fff" strokeWidth="1.400" />
      </svg>
      <svg className="ml-[15px]" width="20" height="20" viewBox="0 0 20 20" fill="none" stroke="#fff" strokeWidth="1.300">
        <path d="M7 14 15 1.500q1.500-1.500 2 .8L9.500 15 6.500 17zM7 10.500q-6.500 1-6 5 1.500 5 8.500 2l2.500-1q1.500-6 4-6.500 2.500-.5 3.500-1" />
      </svg>
      <span className="ml-[18px] w-[58px] text-[14.500px] tracking-[-0.6px]">17:05</span>
      <svg width="20" height="20" viewBox="0 0 20 20"><path d="M0 0h20v17h-7l-3 3-3-3H0z" fill="#fff" /><path d="M4 4.500h12M4 8.500h12M4 12.500h8" stroke="#2c4535" strokeWidth="1.200" /></svg>
      <span className="mr-[5px] ml-[25px] h-[38px] w-px bg-[#8a988f]" />
    </div>
  </div>
);

export default function App() {
  return (
    <div className="flex h-[1080px] w-[1920px] flex-col overflow-hidden bg-[#444] font-['Noto_Sans',sans-serif]">
      <TabStrip />
      <Toolbar />
      <Header />
      <div className="flex h-[859px] shrink-0">
        <Sidebar />
        <div className="relative flex-1">
          <Nodes />
          <Panel />
          <Wrench />
        </div>
      </div>
      <Taskbar />
    </div>
  );
}
